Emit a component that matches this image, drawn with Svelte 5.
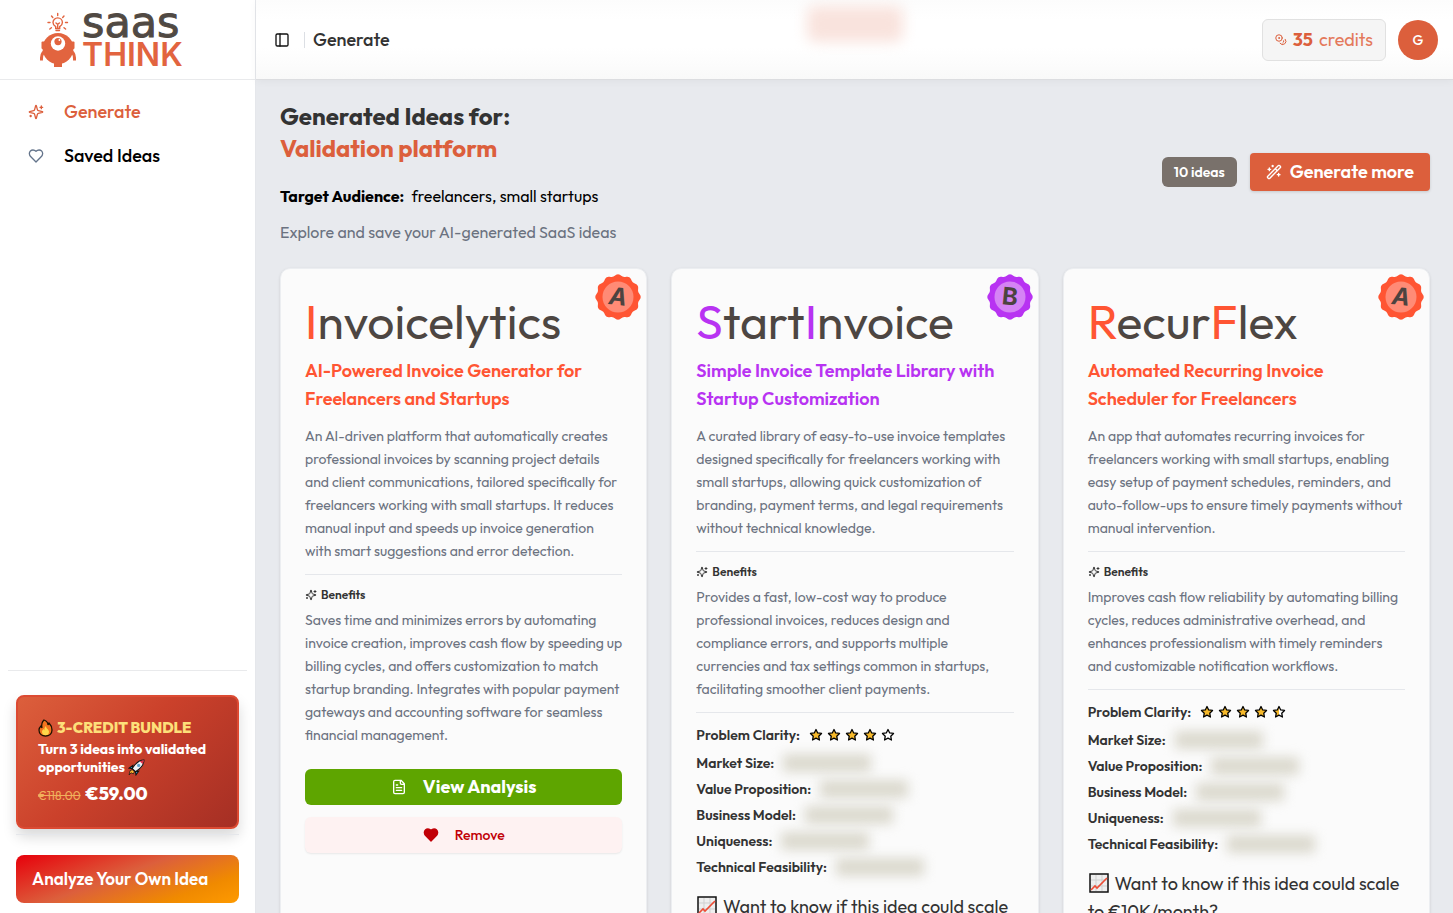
<script>
	const ideas = [
		{
			name: [["I", true], ["nvoicelytics", false]],
			grade: "A",
			color: "#ff5533",
			tint: "#ff8b76",
			tagline: "AI-Powered Invoice Generator for\nFreelancers and Startups",
			description:
				"An AI-driven platform that automatically creates\nprofessional invoices by scanning project details\nand client communications, tailored specifically for\nfreelancers working with small startups. It reduces\nmanual input and speeds up invoice generation\nwith smart suggestions and error detection.",
			benefits:
				"Saves time and minimizes errors by automating\ninvoice creation, improves cash flow by speeding up\nbilling cycles, and offers customization to match\nstartup branding. Integrates with popular payment\ngateways and accounting software for seamless\nfinancial management.",
			saved: true,
		},
		{
			name: [["S", true], ["tart", false], ["I", true], ["nvoice", false]],
			grade: "B",
			color: "#b833f2",
			tint: "#d583f5",
			tagline: "Simple Invoice Template Library with\nStartup Customization",
			description:
				"A curated library of easy-to-use invoice templates\ndesigned specifically for freelancers working with\nsmall startups, allowing quick customization of\nbranding, payment terms, and legal requirements\nwithout technical knowledge.",
			benefits:
				"Provides a fast, low-cost way to produce\nprofessional invoices, reduces design and\ncompliance errors, and supports multiple\ncurrencies and tax settings common in startups,\nfacilitating smoother client payments.",
			clarity: 4,
		},
		{
			name: [["R", true], ["ecur", false], ["F", true], ["lex", false]],
			grade: "A",
			color: "#ff5533",
			tint: "#ff8b76",
			tagline: "Automated Recurring Invoice\nScheduler for Freelancers",
			description:
				"An app that automates recurring invoices for\nfreelancers working with small startups, enabling\neasy setup of payment schedules, reminders, and\nauto-follow-ups to ensure timely payments without\nmanual intervention.",
			benefits:
				"Improves cash flow reliability by automating billing\ncycles, reduces administrative overhead, and\nenhances professionalism with timely reminders\nand customizable notification workflows.",
			clarity: 4.5,
		},
	];

	const hidden = ["Market Size:", "Value Proposition:", "Business Model:", "Uniqueness:", "Technical Feasibility:"];
	const star = "M12 2.5l2.9 6 6.6.9-4.8 4.6 1.2 6.6-5.9-3.2-5.9 3.2 1.2-6.6L2.5 9.4l6.6-.9z";

	// scalloped edge of the grade seal
	const seal =
		Array.from({ length: 144 }, (_, i) => {
			const a = (i / 144) * Math.PI * 2;
			const r = 21.8 + 0.9 * Math.cos(a * 12);
			return `${i ? "L" : "M"}${(23 + r * Math.sin(a)).toFixed(2)} ${(23 - r * Math.cos(a)).toFixed(2)}`;
		}).join("") + "Z";
</script>

{#snippet sparkles(size)}
	<svg class="icon" width={size} height={size} viewBox="0 0 24 24" aria-hidden="true">
		<path d="M9.937 15.5A2 2 0 0 0 8.5 14.063l-6.135-1.582a.5.5 0 0 1 0-.962L8.5 9.936A2 2 0 0 0 9.937 8.5l1.582-6.135a.5.5 0 0 1 .963 0L14.063 8.5A2 2 0 0 0 15.5 9.937l6.135 1.581a.5.5 0 0 1 0 .964L15.5 14.063a2 2 0 0 0-1.437 1.437l-1.582 6.135a.5.5 0 0 1-.963 0z" />
		<path d="M20 3v4M22 5h-4M4 17v2M5 18H3" />
	</svg>
{/snippet}

{#snippet heart(size, fill)}
	<svg class="icon" width={size} height={size} viewBox="0 0 24 24" style:fill aria-hidden="true">
		<path d="M19 14c1.49-1.46 3-3.21 3-5.5A5.5 5.5 0 0 0 16.5 3c-1.76 0-3 .5-4.5 2-1.5-1.5-2.74-2-4.5-2A5.5 5.5 0 0 0 2 8.5c0 2.3 1.5 4.05 3 5.5l7 7Z" />
	</svg>
{/snippet}

<div class="app">
	<aside>
		<a class="logo" href="/" aria-label="saas THINK">
			<svg width="36" height="56" viewBox="40 12 36 56" aria-hidden="true">
				<g fill="none" stroke="#e2643f" stroke-width="1.4" stroke-linecap="round">
					<path d="M55.7 28.5v-1.8c-1.7-1-2.7-2.4-2.7-4.1a4.7 4.7 0 0 1 9.4 0c0 1.7-1 3.1-2.7 4.1v1.8zM56 30.5h3.5M56 23l1.7 1.3 1.7-1.3M57.7 24.3v3.5" />
					<path d="M57.7 13.5v2M51.5 16l1.3 1.5M64 16l-1.3 1.5M48 22.5h2M65.5 22.5h2M49.8 29l1.6-1.3M65.6 29L64 27.7" />
				</g>
				<g fill="#e2643f">
					<circle cx="58" cy="48.5" r="15.5" />
					<rect x="41.5" y="41.5" width="33" height="7.5" rx="1" />
					<path d="M54 61h8v6h-8z" />
				</g>
				<path d="M43.5 52c-1.500 2-2.300 4-2 8.500M72.500 52c1.500 2 2.300 4 2 8.500" fill="none" stroke="#e2643f" stroke-width="3" />
				<circle cx="58" cy="43.5" r="7.2" fill="#fff" />
				<circle cx="58" cy="41.6" r="3.6" fill="#e2643f" />
				<circle cx="59.4" cy="40" r="0.9" fill="#fff" />
			</svg>
			<span class="wordmark"><span class="saas">saas</span><span class="think">THINK</span></span>
		</a>

		<nav>
			<a class="active" href="/generate">{@render sparkles(16)}Generate</a>
			<a href="/saved">{@render heart(16, "none")}Saved Ideas</a>
		</nav>

		<div class="bottom">
			<a class="bundle" href="/pricing">
				<span class="bundle-title">
					<svg width="15" height="18" viewBox="0 0 15 18" aria-hidden="true">
						<path d="M6 1c3 1 4 3 4 5l1-2c2 2 3 5 3 7 0 4-3 6-6.5 6S1 15 1 11c0-2 1-3 2-4l1 2C3 5 4 3 6 1z" fill="#f4751f" stroke="#1d1200" stroke-width="1.3" />
						<path d="M8 7c0 3 3 3 3 6 0 2-1.5 3.3-3.5 3.3S4 15 4 13c0-2 1-2 1.5-3l1 1.5C6 9 7 8 8 7z" fill="#ffd84a" />
					</svg>
					3-CREDIT BUNDLE
				</span>
				<span class="bundle-text">
					Turn 3 ideas into validated<br />opportunities
					<svg width="17" height="17" viewBox="0 0 16 16" aria-hidden="true">
						<path d="M4.5 6L1 8.5l3 .5zM10 11.5L7.5 15 7 12z" fill="#2fb5ea" stroke="#111" />
						<path d="M3 13l-2 2 1-4 2-1 2 2-1 2z" fill="#ffb22e" stroke="#111" stroke-width="0.7" />
						<path d="M15 1c-5 0-8 3-11 8l3 3c5-3 8-6 8-11z" fill="#eef2f5" stroke="#111" />
						<path d="M15 1l-4 1 3 3z" fill="#df3148" />
						<circle cx="10" cy="6" r="1.5" fill="#5b9fc7" />
					</svg>
				</span>
				<span class="price"><s>€118.00</s> €59.00</span>
			</a>
			<hr />
			<button class="analyze">Analyze Your Own Idea</button>
		</div>
	</aside>

	<div class="page">
		<header>
			<span class="glow"></span>
			<button class="toggle" aria-label="Toggle sidebar">
				<svg class="icon" width="16" height="16" viewBox="0 0 24 24" aria-hidden="true">
					<rect x="3" y="3" width="18" height="18" rx="2" /><path d="M9 3v18" />
				</svg>
			</button>
			<span class="crumb">Generate</span>
			<a class="credits" href="/credits">
				<svg class="icon" width="12" height="12" viewBox="0 0 24 24" aria-hidden="true">
					<circle cx="8" cy="8" r="6.5" /><circle cx="8" cy="8" r="1" />
					<path d="M20.5 10.5A6.5 6.5 0 1 1 10 18.5M17.5 13.5q1 3-2 4.5" />
				</svg>
				<strong>35</strong> credits
			</a>
			<button class="avatar" aria-label="Account">G</button>
		</header>

		<main>
			<section class="intro">
				<div>
					<h1>Generated Ideas for:<br /><em>Validation platform</em></h1>
					<p class="audience"><strong>Target Audience:</strong> freelancers, small startups</p>
					<p class="hint">Explore and save your AI-generated SaaS ideas</p>
				</div>
				<div class="actions">
					<span class="count">10 ideas</span>
					<button class="more">
						<svg class="icon" width="16" height="16" viewBox="0 0 24 24" aria-hidden="true">
							<path d="m21.64 3.64-1.28-1.28a1.21 1.21 0 0 0-1.72 0L2.36 18.64a1.21 1.21 0 0 0 0 1.72l1.28 1.28a1.2 1.2 0 0 0 1.72 0L21.64 5.36a1.2 1.2 0 0 0 0-1.72M14 7l3 3M5 6v4M19 14v4M10 2v2M7 8H3M21 16h-4M11 3H9" />
						</svg>
						Generate more
					</button>
				</div>
			</section>

			<section class="cards">
				{#each ideas as idea}
					<article style:--accent={idea.color}>
						<svg class="seal" width="46" height="46" viewBox="0 0 46 46">
							<path d={seal} fill={idea.color} />
							<circle cx="23" cy="23" r="15.5" fill={idea.tint} />
							<text x="23" y="31" text-anchor="middle" transform="rotate(6 23 23)" font-style={idea.grade === "A" ? "italic" : "normal"}>{idea.grade}</text>
						</svg>
						<h2>{#each idea.name as [part, lit]}<span class:lit>{part}</span>{/each}</h2>
						<h3>{idea.tagline}</h3>
						<p class="copy">{idea.description}</p>
						<hr />
						<h4>{@render sparkles(12)}Benefits</h4>
						<p class="copy">{idea.benefits}</p>

						{#if idea.saved}
							<div class="card-actions">
								<button class="view">
									<svg class="icon" width="16" height="16" viewBox="0 0 24 24" aria-hidden="true">
										<path d="M15 2H6a2 2 0 0 0-2 2v16a2 2 0 0 0 2 2h12a2 2 0 0 0 2-2V7ZM14 2v4a2 2 0 0 0 2 2h4M10 9H8M16 13H8M16 17H8" />
									</svg>
									View Analysis
								</button>
								<button class="remove">{@render heart(16, "currentColor")}Remove</button>
							</div>
						{:else}
							<hr />
							<div class="score first">
								Problem Clarity:
								<span class="stars" role="img" aria-label="{idea.clarity} out of 5">
									{#each [1, 2, 3, 4, 5] as n}
										<svg width="14" height="14" viewBox="0 0 24 24" aria-hidden="true">
											<path d={star} fill="#fff" />
											{#if idea.clarity >= n}
												<path d={star} fill="#f6b92b" />
											{:else if idea.clarity > n - 1}
												<path d="M12 2.5v14.9l-5.9 3.2 1.2-6.6-4.8-4.6 6.6-.9z" fill="#f6b92b" />
											{/if}
											<path d={star} fill="none" stroke="#000" stroke-width="2.2" stroke-linejoin="round" />
										</svg>
									{/each}
								</span>
							</div>
							{#each hidden as label}
								<div class="score">{label}<span class="blurred"></span></div>
							{/each}
							<p class="question">
								<svg width="23" height="20" viewBox="0 0 23 20" aria-hidden="true">
									<rect x="2" y="1" width="18" height="18" fill="#eee" stroke="#111" stroke-width="1.5" />
									<path d="M8 2v16M14 2v16M3 7h16M3 13h16" stroke="#cfcfcf" />
									<path d="M3 17l4-4 2 2 10-10" fill="none" stroke="#ed4b34" stroke-width="1.6" />
								</svg>
								Want to know if this idea could scale<br />to €10K/month?
							</p>
						{/if}
					</article>
				{/each}
			</section>
		</main>
	</div>
</div>

<style>
	:global(body) {
		color: #333;
		font-family: Outfit, Lato, "Open Sans", sans-serif;
		font-size: 16px;
		line-height: 24px;
	}

	* {
		box-sizing: border-box;
		margin: 0;
	}

	a {
		color: inherit;
		text-decoration: none;
	}

	button {
		border: 0;
		padding: 0;
		background: none;
		color: inherit;
		font: inherit;
		cursor: pointer;
	}

	hr {
		border: 0;
		border-top: 1px solid #e5e7eb;
	}

	.icon {
		flex: none;
		fill: none;
		stroke: currentColor;
		stroke-width: 2;
		stroke-linecap: round;
		stroke-linejoin: round;
	}

	.app {
		display: flex;
		height: 100vh;
		overflow: hidden;
	}

	aside {
		display: flex;
		flex-direction: column;
		flex: 0 0 256px;
		border-right: 1px solid #e5e7eb;
		background: #fff;
	}

	.logo {
		display: flex;
		gap: 6px;
		height: 80px;
		padding: 12px 40px;
		border-bottom: 1px solid #e9eaec;
	}

	.logo svg {
		flex: none;
	}

	.wordmark {
		display: flex;
		flex-direction: column;
		gap: 7px;
	}

	.saas {
		color: #504943;
		font: 43px/20px "DejaVu Sans", sans-serif;
		-webkit-text-stroke: 1px #504943;
	}

	.think {
		color: #e2643f;
		font: 600 32px/32px Inter, sans-serif;
	}

	nav {
		display: flex;
		flex-direction: column;
		gap: 4px;
		padding: 12px 8px;
	}

	nav a {
		display: flex;
		align-items: center;
		gap: 20px;
		height: 40px;
		padding: 0 20px;
		color: #000;
		font-size: 18px;
		font-weight: 500;
	}

	nav .icon {
		color: #64748b;
	}

	nav .active,
	nav .active .icon {
		color: #dc5f3c;
	}

	.bottom {
		margin: auto 8px 0;
		padding: 24px 8px 10px;
		border-top: 1px solid #e9eaec;
	}

	.bundle {
		display: flex;
		flex-direction: column;
		height: 134px;
		padding: 20px;
		border: 2px solid #dc4a32;
		border-radius: 8px;
		background: linear-gradient(135deg, #dc5f3c, #cb412b 45%, #a52f24);
		box-shadow: 0 8px 14px rgba(0, 0, 0, 0.15);
		color: #fff;
		font-weight: 800;
	}

	.bundle-title {
		display: flex;
		align-items: center;
		gap: 4px;
		height: 22px;
		margin-bottom: 1px;
		color: #fde07a;
		font-size: 15px;
	}

	.bundle-text {
		font-size: 14px;
		font-weight: 700;
		line-height: 18px;
	}

	.bundle-text svg {
		vertical-align: -4px;
	}

	.price {
		margin-top: 6px;
		font-size: 18px;
	}

	.price s {
		margin-right: 2px;
		color: #f0b05c;
		font-size: 12px;
		font-weight: 400;
	}

	.bottom hr {
		margin: 5px 0 20px;
	}

	.analyze {
		width: 100%;
		height: 48px;
		padding: 0 16px;
		border-radius: 8px;
		background: linear-gradient(160deg, #e7000b, #dc5f3c 45%, #f08a00 78%, #fe9a00);
		color: #fff;
		font-size: 17px;
		font-weight: 600;
		text-align: left;
	}

	.page {
		display: flex;
		flex: 1;
		flex-direction: column;
		min-width: 0;
		background: #e8eaee;
	}

	header {
		position: relative;
		display: flex;
		flex: none;
		align-items: center;
		height: 80px;
		padding: 0 15px 0 18px;
		border-bottom: 1px solid #dcdde0;
		background: linear-gradient(#fcfcfc, #fff 25%, #fff 60%, #f9f9f9);
		box-shadow: 0 2px 8px rgba(0, 0, 0, 0.04);
	}

	.glow {
		position: absolute;
		top: 6px;
		left: 46%;
		width: 96px;
		height: 36px;
		border-radius: 8px;
		background: #f9e3dd;
		filter: blur(7px);
	}

	.toggle {
		display: flex;
		padding-right: 14px;
		color: #111;
	}

	.crumb {
		margin-right: auto;
		padding-left: 8px;
		border-left: 1px solid #dcdfe4;
		font-size: 18px;
		font-weight: 500;
		line-height: 16px;
	}

	.credits {
		display: flex;
		align-items: center;
		gap: 6px;
		height: 42px;
		margin-right: 12px;
		padding: 0 12px;
		border: 1px solid #e1e1e1;
		border-radius: 6px;
		background: #f5f5f5;
		color: #e4795b;
		font-size: 18px;
	}

	.credits .icon,
	.credits strong {
		color: #dc5f3c;
	}

	.avatar {
		width: 40px;
		height: 40px;
		border-radius: 50%;
		background: #dc5f3c;
		color: #fff;
		font-size: 14px;
		font-weight: 500;
	}

	main {
		flex: 1;
		padding: 20px 23px 24px 24px;
		overflow-y: auto;
		scrollbar-width: none;
	}

	.intro {
		display: flex;
		align-items: center;
		justify-content: space-between;
		margin-bottom: 24px;
	}

	h1 {
		margin-bottom: 20px;
		font-size: 24px;
		font-weight: 700;
		line-height: 32px;
	}

	h1 em {
		color: #dc5f3c;
		font-style: normal;
	}

	.audience {
		margin-bottom: 12px;
		color: #000;
	}

	.audience strong {
		margin-right: 4px;
	}

	.hint {
		color: #6b7280;
	}

	.actions {
		display: flex;
		align-items: center;
		gap: 13px;
	}

	.count {
		padding: 3px 12px;
		border-radius: 6px;
		background: #79716b;
		color: #fff;
		font-size: 14px;
		font-weight: 600;
	}

	.more {
		display: flex;
		align-items: center;
		gap: 8px;
		height: 38px;
		padding: 0 16px;
		border-radius: 4px;
		background: #dc5f3c;
		box-shadow: 0 1px 3px rgba(0, 0, 0, 0.15);
		color: #fff;
		font-size: 18px;
		font-weight: 600;
	}

	.cards {
		display: grid;
		grid-template-columns: repeat(3, minmax(0, 1fr));
		gap: 24px;
	}

	article {
		position: relative;
		padding: 24px;
		border: 1px solid #eceef1;
		border-radius: 10px;
		background: #fbfbfb;
		box-shadow: 0 1px 3px rgba(0, 0, 0, 0.12);
	}

	.seal {
		position: absolute;
		top: 5px;
		right: 5px;
	}

	.seal text {
		fill: #4d4340;
		font-family: Inter, sans-serif;
		font-size: 24px;
		font-weight: 700;
	}

	h2 {
		margin-bottom: 8px;
		color: #4d4642;
		font-size: 48px;
		font-weight: 400;
		line-height: 56px;
		white-space: nowrap;
	}

	.lit,
	h3 {
		color: var(--accent);
	}

	h3 {
		margin-bottom: 12px;
		font-size: 18px;
		font-weight: 600;
		line-height: 28px;
		white-space: pre;
	}

	.copy {
		color: #6b7280;
		font-size: 14px;
		line-height: 23px;
		white-space: pre;
	}

	article hr {
		margin-top: 11px;
	}

	h4 {
		display: flex;
		align-items: center;
		gap: 4px;
		margin: 11px 0 5px;
		font-size: 12px;
		font-weight: 600;
		line-height: 18px;
	}

	.card-actions {
		display: grid;
		gap: 12px;
		margin-top: 22px;
	}

	.card-actions button {
		display: flex;
		align-items: center;
		justify-content: center;
		gap: 16px;
		height: 36px;
		border-radius: 6px;
	}

	.view {
		background: #5ea500;
		color: #fff;
		font-size: 18px;
		font-weight: 700;
	}

	.remove {
		background: #fef2f2;
		box-shadow: 0 1px 2px rgba(0, 0, 0, 0.08);
		color: #c10007;
		font-size: 14px;
		font-weight: 500;
	}

	.score {
		display: flex;
		align-items: center;
		gap: 9px;
		height: 26px;
		font-size: 14px;
		font-weight: 600;
	}

	.score.first {
		margin: 9px 0 2px;
	}

	.stars {
		display: flex;
		gap: 4px;
	}

	.blurred {
		width: 88px;
		height: 18px;
		background: #dbd9ce;
		filter: blur(6px);
	}

	.question {
		margin-top: 13px;
		font-size: 18px;
		line-height: 28px;
		white-space: nowrap;
	}

	.question svg {
		vertical-align: -3px;
	}
</style>
